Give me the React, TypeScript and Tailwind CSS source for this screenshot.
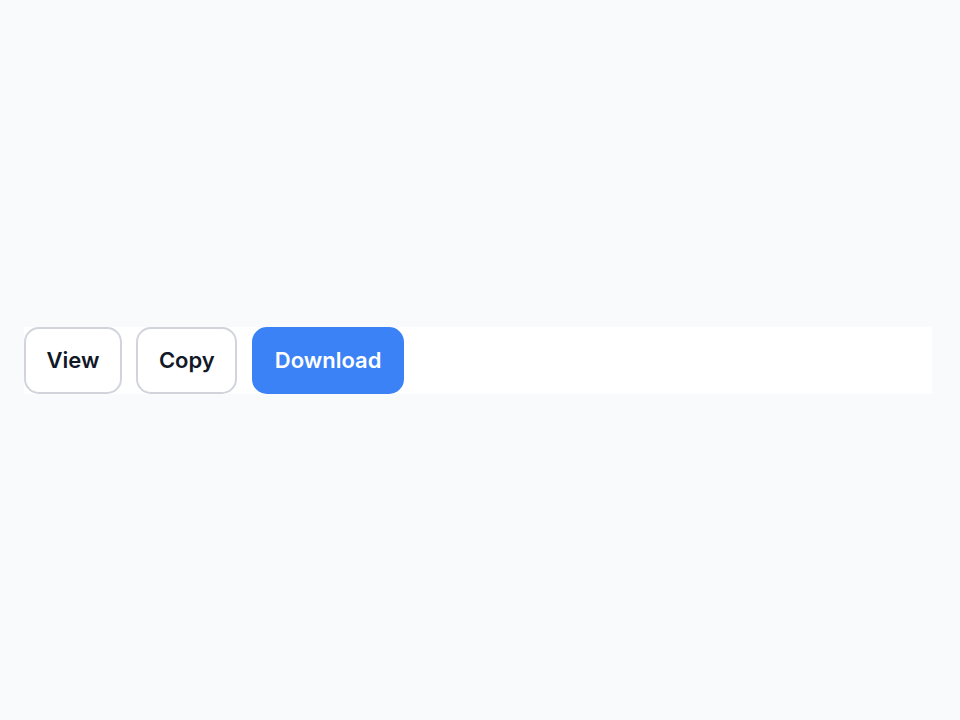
import React from 'react';

export default function App() {
  return (
    <div className="min-h-screen w-full bg-[#f8fafc] pl-6 pr-7 flex items-center font-['Inter',sans-serif]">
      {/* Toolbar strip */}
      <div className="w-full bg-white flex items-center gap-[14.5px]">
        <button className="h-[67px] px-[20.5px] rounded-[15px] border-2 border-[#d1d5db] bg-white text-[22px] font-semibold text-[#111827] pt-px">
          View
        </button>
        <button className="h-[67px] px-[20.5px] rounded-[15px] border-2 border-[#d1d5db] bg-white text-[22px] font-semibold text-[#111827] pt-px">
          Copy
        </button>
        <button className="h-[67px] px-[23px] rounded-[15px] bg-[#3b82f6] text-[22px] font-semibold text-white pt-px">
          Download
        </button>
      </div>
    </div>
  );
}
